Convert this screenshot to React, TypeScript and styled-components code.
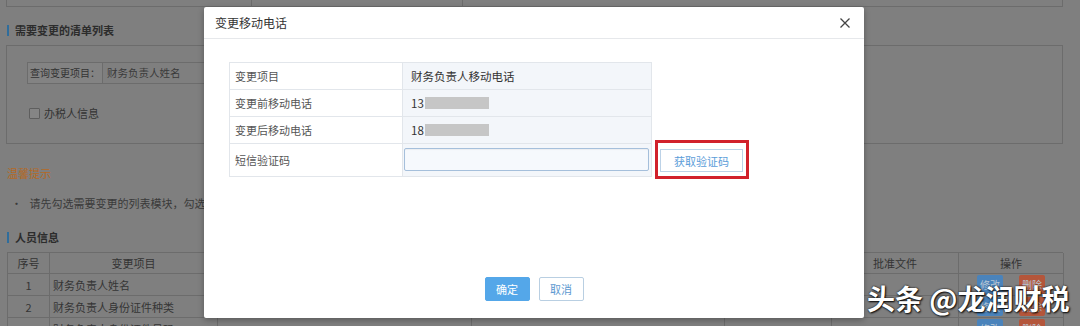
import React from 'react';
import styled, { createGlobalStyle } from 'styled-components';

const GlobalStyle = createGlobalStyle`
	html, body {
		margin: 0;
		padding: 0;
		background: #7f7f7f;
	}
	body {
		font-family: "Noto Sans CJK SC", "Noto Sans", sans-serif;
	}
`;

const rows = [
	{ no: '1', item: '财务负责人姓名', code: '' },
	{ no: '2', item: '财务负责人身份证件种类', code: '' },
	{ no: '3', item: '财务负责人身份证件号码', code: '330000000000000001' },
];

export default function App() {
	return (
		<Screen>
			<GlobalStyle />
			<Page>
				<TopTable>
					<TopCell $w={244} />
					<TopCell $w={210} />
					<TopCell $w={600} />
				</TopTable>
				<SectionTitle>需要变更的清单列表</SectionTitle>
				<Panel>
					<QueryRow>
						<QueryLabel>查询变更项目：</QueryLabel>
						<QueryValue>财务负责人姓名</QueryValue>
					</QueryRow>
					<CheckRow>
						<CheckBox />
						办税人信息
					</CheckRow>
				</Panel>
				<Tip>温馨提示</Tip>
				<TipLine>•&nbsp;&nbsp;&nbsp;请先勾选需要变更的列表模块，勾选之后点击确定按钮</TipLine>
				<SectionTitle $gap={18}>人员信息</SectionTitle>
				<Grid>
					<HeadCell>序号</HeadCell>
					<HeadCell>变更项目</HeadCell>
					<HeadCell>变更前内容</HeadCell>
					<HeadCell>变更后内容</HeadCell>
					<HeadCell>批准日期</HeadCell>
					<HeadCell>批准文件</HeadCell>
					<HeadCell>操作</HeadCell>
					{rows.map((r) => (
						<React.Fragment key={r.no}>
							<Cell $center>{r.no}</Cell>
							<Cell>{r.item}</Cell>
							<Cell />
							<Cell>{r.code}</Cell>
							<Cell />
							<Cell />
							<Cell $center>
								<OpButton $tone="edit">修改</OpButton>
								<OpButton $tone="del">删除</OpButton>
							</Cell>
						</React.Fragment>
					))}
				</Grid>
			</Page>

			<Modal>
				<ModalHeader>
					<ModalTitle>变更移动电话</ModalTitle>
					<CloseIcon viewBox="0 0 10 10">
						<path d="M0.5 0.5 L9.5 9.5 M9.5 0.5 L0.5 9.5" />
					</CloseIcon>
				</ModalHeader>
				<ModalBody>
					<FormTable>
						<FormRow>
							<LabelCell>变更项目</LabelCell>
							<ValueCell>财务负责人移动电话</ValueCell>
						</FormRow>
						<FormRow>
							<LabelCell>变更前移动电话</LabelCell>
							<ValueCell>
								13<Masked />
							</ValueCell>
						</FormRow>
						<FormRow>
							<LabelCell>变更后移动电话</LabelCell>
							<ValueCell>
								18<Masked />
							</ValueCell>
						</FormRow>
						<FormRow $tall>
							<LabelCell>短信验证码</LabelCell>
							<InputCell>
								<CodeInput type="text" />
							</InputCell>
						</FormRow>
					</FormTable>
					<Highlight>
						<CodeButton>获取验证码</CodeButton>
					</Highlight>
				</ModalBody>
				<ModalFooter>
					<FooterButton $primary>确定</FooterButton>
					<FooterButton>取消</FooterButton>
				</ModalFooter>
			</Modal>

			<Watermark>头条 @龙润财税</Watermark>
		</Screen>
	);
}

const Screen = styled.div`
	position: relative;
	width: 1080px;
	height: 326px;
	overflow: hidden;
	background: #7f7f7f;
	color: #353535;
	font-size: 11px;
`;

const Page = styled.div`
	display: flex;
	flex-direction: column;
	padding: 0 17px 0 6px;
`;

const TopTable = styled.div`
	display: flex;
	height: 6px;
	border-left: 1px solid #6c6c6c;
	border-bottom: 1px solid #6c6c6c;
`;

const TopCell = styled.div<{ $w: number }>`
	width: ${(p) => p.$w}px;
	border-right: 1px solid #6c6c6c;
`;

const SectionTitle = styled.div<{ $gap?: number }>`
	margin-top: ${(p) => p.$gap ?? 15}px;
	line-height: 16px;
	padding-left: 9px;
	font-weight: 700;
	color: #2c2c2c;
	position: relative;
	&::before {
		content: '';
		position: absolute;
		left: 1px;
		top: 3px;
		width: 2px;
		height: 11px;
		background: #2f6d9c;
	}
`;

const Panel = styled.div`
	margin-top: 7px;
	border: 1px solid #6c6c6c;
	padding: 16px 20px 0;
	box-sizing: border-box;
	height: 99px;
`;

const QueryRow = styled.div`
	display: flex;
	height: 22px;
	line-height: 20px;
`;

const QueryLabel = styled.div`
	width: 76px;
	box-sizing: border-box;
	border: 1px solid #6c6c6c;
	background: #838383;
	text-align: center;
	white-space: nowrap;
	font-size: 10px;
	color: #333;
`;

const QueryValue = styled.div`
	width: 320px;
	border: 1px solid #6c6c6c;
	border-left: none;
	padding-left: 4px;
	white-space: nowrap;
	font-size: 10.5px;
	color: #3a3a3a;
`;

const CheckRow = styled.div`
	display: flex;
	align-items: center;
	gap: 4px;
	margin-top: 21px;
	padding-left: 2px;
	color: #333;
`;

const CheckBox = styled.span`
	width: 9px;
	height: 9px;
	border: 1px solid #5e5e5e;
	border-radius: 1px;
	background: #858585;
`;

const Tip = styled.div`
	margin-top: 21px;
	line-height: 16px;
	padding-left: 1px;
	color: #b5691f;
`;

const TipLine = styled.div`
	margin-top: 14px;
	line-height: 16px;
	padding-left: 5px;
	color: #3a3a3a;
`;

const Grid = styled.div`
	margin-top: 7px;
	margin-left: 1px;
	display: grid;
	grid-template-columns: 42px 168px 254px 253px 107px 127px 105px;
	grid-template-rows: 21px;
	grid-auto-rows: 22px;
	border-top: 1px solid #6c6c6c;
	border-left: 1px solid #6c6c6c;
`;

const HeadCell = styled.div`
	border-right: 1px solid #6c6c6c;
	border-bottom: 1px solid #6c6c6c;
	display: flex;
	align-items: center;
	justify-content: center;
	color: #333;
`;

const Cell = styled.div<{ $center?: boolean }>`
	border-right: 1px solid #6c6c6c;
	border-bottom: 1px solid #6c6c6c;
	display: flex;
	align-items: center;
	justify-content: ${(p) => (p.$center ? 'center' : 'flex-start')};
	gap: 16px;
	padding-left: ${(p) => (p.$center ? 0 : 3)}px;
	white-space: nowrap;
	color: #353535;
`;

const OpButton = styled.span<{ $tone: 'edit' | 'del' }>`
	width: 26px;
	height: 19px;
	line-height: 19px;
	text-align: center;
	font-size: 10px;
	border-radius: 2px;
	color: #b8c6d4;
	background: ${(p) => (p.$tone === 'edit' ? '#4a83bb' : '#b4563b')};
`;

const Modal = styled.div`
	position: absolute;
	left: 204px;
	top: 7px;
	width: 660px;
	height: 311px;
	background: #fff;
	border-radius: 2px;
	box-shadow: 0 2px 6px rgba(0, 0, 0, 0.3);
	display: flex;
	flex-direction: column;
`;

const ModalHeader = styled.div`
	height: 31px;
	border-bottom: 1px solid #e6e8eb;
	display: flex;
	align-items: center;
	justify-content: space-between;
	padding: 0 14px 0 11px;
`;

const ModalTitle = styled.div`
	font-size: 12px;
	color: #333;
`;

const CloseIcon = styled.svg`
	width: 10px;
	height: 10px;
	fill: none;
	stroke: #444;
	stroke-width: 1.3;
`;

const ModalBody = styled.div`
	display: flex;
	align-items: flex-end;
	padding: 23px 0 0 25px;
`;

const FormTable = styled.div`
	width: 421px;
	border: 1px solid #e2e6eb;
	border-bottom: none;
`;

const FormRow = styled.div<{ $tall?: boolean }>`
	display: flex;
	height: ${(p) => (p.$tall ? 32 : 26)}px;
	border-bottom: 1px solid #e2e6eb;
`;

const LabelCell = styled.div`
	width: 173px;
	border-right: 1px solid #e2e6eb;
	padding-left: 5px;
	box-sizing: border-box;
	display: flex;
	align-items: center;
	color: #555;
	font-size: 11px;
`;

const ValueCell = styled.div`
	flex: 1;
	background: #f3f6fa;
	padding-left: 8px;
	display: flex;
	align-items: center;
	color: #333;
	font-size: 11.5px;
`;

const InputCell = styled.div`
	flex: 1;
	background: #f3f6fa;
	padding: 4px 0 0 1px;
`;

const CodeInput = styled.input`
	display: block;
	width: 245px;
	height: 23px;
	box-sizing: border-box;
	border: 1px solid #a5bfdb;
	border-radius: 2px;
	background: #f6f9fd;
	box-shadow: inset 0 1px 1px rgba(0, 0, 0, 0.05);
	outline: none;
`;

const Masked = styled.span`
	display: inline-block;
	width: 64px;
	height: 12px;
	margin-left: 1px;
	background: #c6c6c6;
	filter: blur(0.5px);
`;

const Highlight = styled.div`
	margin: 0 0 -2px 3px;
	border: 3px solid #d1212b;
	padding: 6px 3px 4px 2px;
`;

const CodeButton = styled.div`
	width: 83px;
	height: 23px;
	box-sizing: border-box;
	border: 1px solid #bcd2e7;
	background: #fff;
	color: #5b9dd9;
	font-size: 11px;
	display: flex;
	align-items: center;
	justify-content: center;
`;

const ModalFooter = styled.div`
	margin-top: auto;
	display: flex;
	justify-content: center;
	gap: 9px;
	padding-bottom: 17px;
`;

const FooterButton = styled.div<{ $primary?: boolean }>`
	width: 45px;
	height: 24px;
	box-sizing: border-box;
	border-radius: 2px;
	font-size: 11px;
	display: flex;
	align-items: center;
	justify-content: center;
	background: ${(p) => (p.$primary ? '#54a7e9' : '#fff')};
	color: ${(p) => (p.$primary ? '#fff' : '#5b98d0')};
	border: 1px solid ${(p) => (p.$primary ? '#54a7e9' : '#b9cfe2')};
`;

const Watermark = styled.div`
	position: absolute;
	left: 867px;
	top: 281px;
	font-size: 28px;
	line-height: 34px;
	font-weight: 700;
	color: #fff;
	white-space: nowrap;
	text-shadow: 0 0 2px #000, 1px 1px 2px rgba(0, 0, 0, 0.9);
`;
